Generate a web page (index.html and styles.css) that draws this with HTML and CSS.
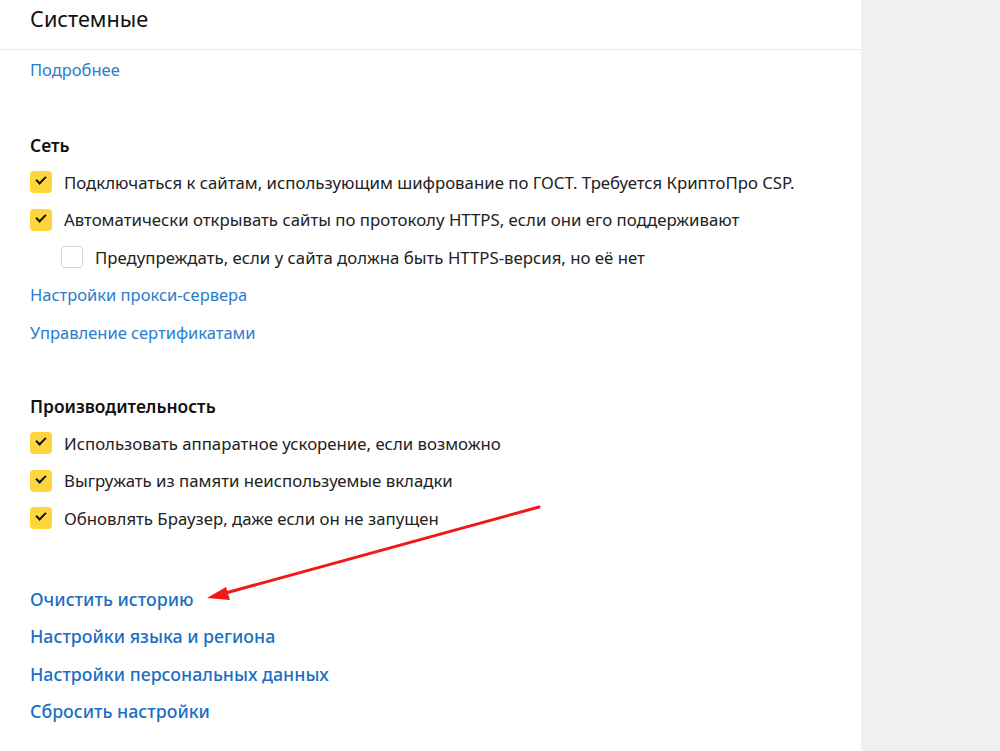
FILE: index.html
```html
<!DOCTYPE html>
<html>
    <head>
        <title>Настройки — Системные</title>
        <link rel="stylesheet" href="styles.css">
    </head>
    <body>
        <div class="page">
            <div class="main">
                <div class="header">
                    <h1>Системные</h1>
                </div>

                <div class="content">
                    <div class="row"><a class="link" href="#">Подробнее</a></div>

                    <div class="section">
                        <h2 class="row">Сеть</h2>
                        <label class="row check">
                            <span class="box checked"></span>
                            Подключаться к сайтам, использующим шифрование по ГОСТ. Требуется КриптоПро CSP.
                        </label>
                        <label class="row check">
                            <span class="box checked"></span>
                            Автоматически открывать сайты по протоколу HTTPS, если они его поддерживают
                        </label>
                        <label class="row check nested">
                            <span class="box"></span>
                            Предупреждать, если у сайта должна быть HTTPS-версия, но её нет
                        </label>
                        <div class="row"><a class="link" href="#">Настройки прокси-сервера</a></div>
                        <div class="row"><a class="link" href="#">Управление сертификатами</a></div>
                    </div>

                    <div class="section perf">
                        <h2 class="row">Производительность</h2>
                        <label class="row check">
                            <span class="box checked"></span>
                            Использовать аппаратное ускорение, если возможно
                        </label>
                        <label class="row check">
                            <span class="box checked"></span>
                            Выгружать из памяти неиспользуемые вкладки
                        </label>
                        <label class="row check">
                            <span class="box checked"></span>
                            Обновлять Браузер, даже если он не запущен
                        </label>
                    </div>

                    <div class="section actions">
                        <div class="row"><a class="link strong" href="#">Очистить историю</a></div>
                        <div class="row"><a class="link strong" href="#">Настройки языка и региона</a></div>
                        <div class="row"><a class="link strong" href="#">Настройки персональных данных</a></div>
                        <div class="row"><a class="link strong" href="#">Сбросить настройки</a></div>
                    </div>
                </div>

                <!-- annotation arrow pointing at "Очистить историю" -->
                <svg class="arrow" width="560" height="620" viewBox="0 0 560 620">
                    <line x1="539" y1="507" x2="222" y2="594" stroke="#f01818" stroke-width="3" stroke-linecap="round"/>
                    <polygon points="207,598 226,587 230,600" fill="#f01818"/>
                </svg>
            </div>
            <div class="side"></div>
        </div>
    </body>
</html>
```

FILE: styles.css
```css
body {
    margin: 0;
    font-family: "Noto Sans", "Open Sans", sans-serif;
    color: #222;
    background: #f1f0ef;
}

.page {
    display: flex;
    min-height: 751px;
}

.main {
    position: relative;
    width: 861px;
    background: #fff;
}

.side {
    flex: 1;
    background: #f1f0ef;
}

.header {
    height: 49px;
    border-bottom: 1px solid #e8e8e8;
    padding-left: 30px;
    display: flex;
    align-items: center;
}

h1 {
    margin: 0 0 12px;
    font-size: 21.7px;
    font-weight: 400;
    color: #111;
}

.content {
    padding: 1px 0 0 30px;
}

.row {
    height: 37.5px;
    display: flex;
    align-items: center;
    margin: 0;
    font-size: 16.8px;
}

h2.row {
    font-weight: 600;
    font-size: 17.4px;
    color: #111;
}

.section {
    margin-top: 37.5px;
}

.perf {
    margin-top: 36px;
}

.actions {
    margin-top: 43px;
}

.link {
    color: #2a7dcc;
    text-decoration: none;
    font-size: 16.5px;
}

.link.strong {
    color: #1a6fc2;
    font-weight: 500;
    font-size: 17.8px;
}

.check {
    gap: 12px;
    cursor: pointer;
}

.nested {
    padding-left: 31px;
}

.box {
    width: 22px;
    height: 22px;
    box-sizing: border-box;
    border-radius: 4px;
    border: 1px solid #d6d6d6;
    background: #fff;
    position: relative;
    flex: none;
}

.box.checked {
    border: none;
    background: #ffd53d;
}

.box.checked::after {
    content: "";
    position: absolute;
    left: 6px;
    top: 5px;
    width: 8px;
    height: 4px;
    border-left: 2.5px solid #111;
    border-bottom: 2.5px solid #111;
    transform: rotate(-45deg);
}

.arrow {
    position: absolute;
    left: 0;
    top: 0;
    pointer-events: none;
}
```
